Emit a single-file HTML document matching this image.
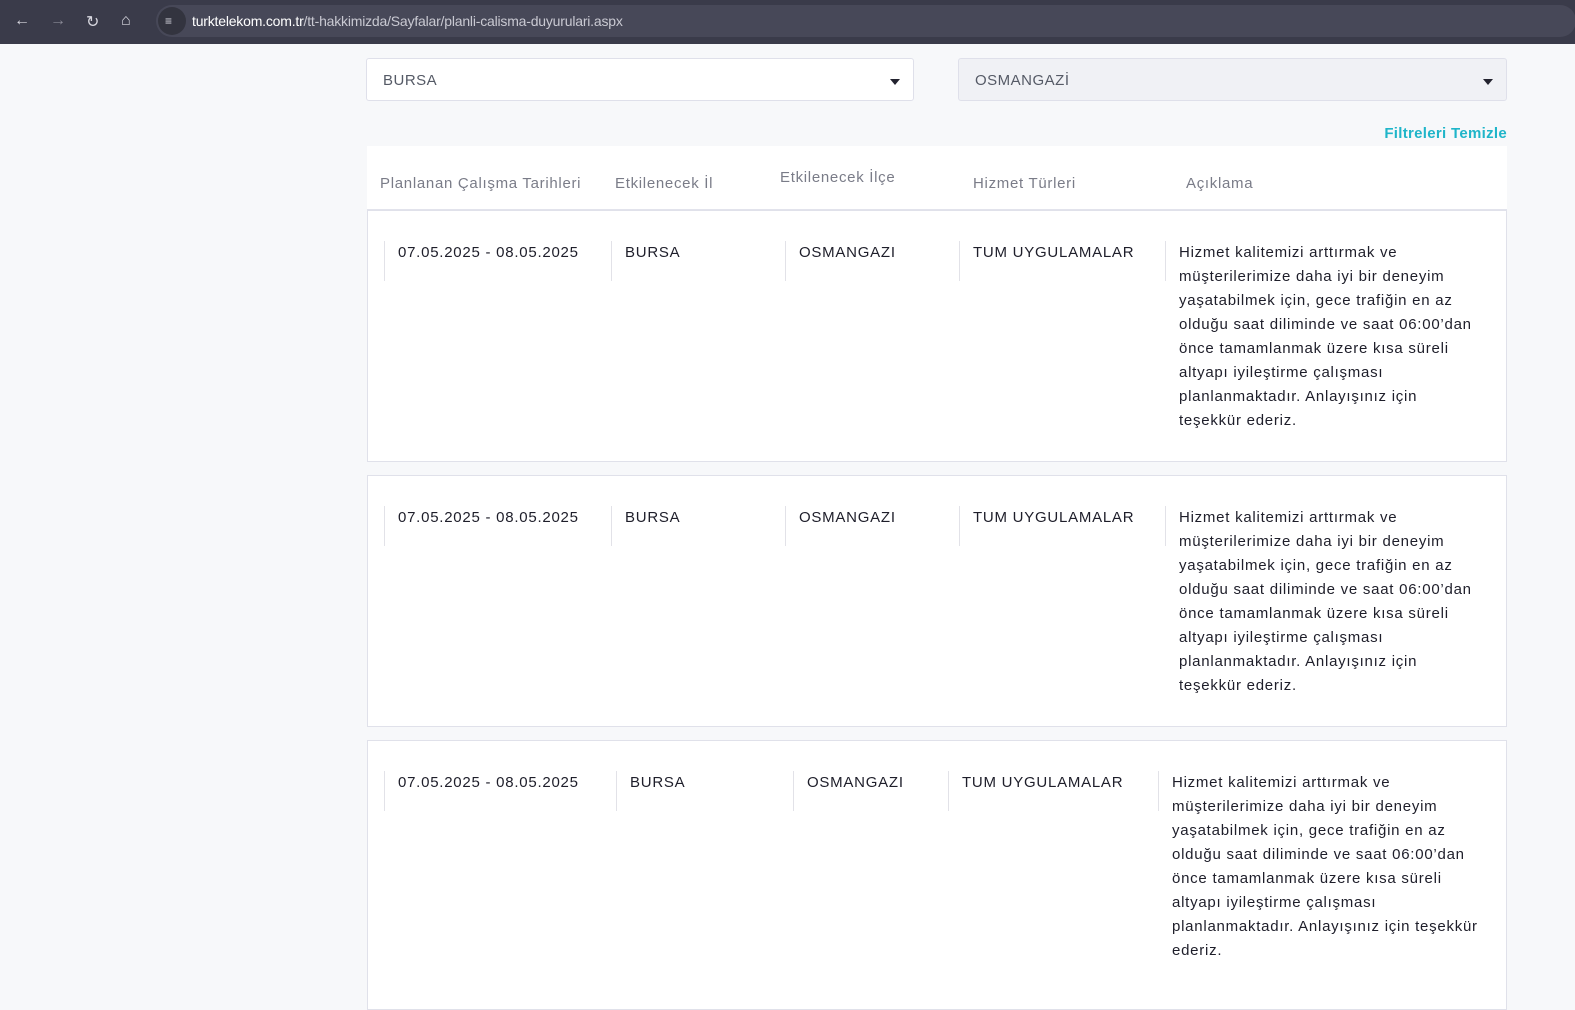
<!DOCTYPE html>
<html><head><meta charset="utf-8"><style>
*{margin:0;padding:0;box-sizing:border-box}
body{width:1575px;height:994px;overflow:hidden;background:#f7f8fa;font-family:"Liberation Sans",sans-serif;position:relative;color:#1e1e2a}
.bar{position:absolute;left:0;top:0;width:1575px;height:44px;background:#3a3b4a}
.pill{position:absolute;left:156px;top:5px;width:1420px;height:32px;border-radius:16px;background:#474858}
.url{position:absolute;left:192px;top:13px;font-size:14px;color:#fff;letter-spacing:-0.2px}
.url span{color:#c9c9d2}
.ic{position:absolute;top:12px;color:#d8d8e0;font-size:16px}
.sel{position:absolute;top:58px;height:43px;border:1px solid #dfe0ea;border-radius:3px;font-size:15px;color:#555a66;padding:13px 16px;letter-spacing:0.5px}
.sel:after{content:"";position:absolute;right:13px;top:20px;border-left:5px solid transparent;border-right:5px solid transparent;border-top:6px solid #23232f}
.clear{position:absolute;right:68px;top:125px;font-size:15px;font-weight:bold;color:#1fb5c9;letter-spacing:0.3px}
.head{position:absolute;left:367px;top:146px;width:1140px;height:64px;background:#fff;border-bottom:1px solid #e2e3ec}
.h{position:absolute;font-size:15px;color:#7a7c88;letter-spacing:0.7px}
.card{position:absolute;left:367px;width:1140px;background:#fff;border:1px solid #e0e1ea}
.c{position:absolute;top:30px;font-size:15px;line-height:24px;color:#1e1e2a;padding-left:13px;border-left:1px solid #e2e2e8;height:40px;letter-spacing:0.75px;white-space:nowrap}
.c.d{height:auto;border:none;padding-left:0}
.dl{position:absolute;top:30px;width:1px;height:40px;background:#e2e2e8}
</style></head><body>
<div class="bar"><div class="pill"></div>
<div class="ic" style="left:14px">&#8592;</div>
<div class="ic" style="left:50px;color:#8a8a96">&#8594;</div>
<div class="ic" style="left:86px">&#8635;</div>
<div class="ic" style="left:121px">&#8962;</div>
<div style="position:absolute;left:158px;top:7px;width:28px;height:28px;border-radius:14px;background:#33343f"></div>
<div class="ic" style="left:165px;font-size:12px;top:14px">&#8801;</div>
<div class="url">turktelekom.com.tr<span>/tt-hakkimizda/Sayfalar/planli-calisma-duyurulari.aspx</span></div>
</div>
<div class="sel" style="left:366px;width:548px;background:#fff">BURSA</div>
<div class="sel" style="left:958px;width:549px;background:#f0f1f5">OSMANGAZİ</div>
<div class="clear">Filtreleri Temizle</div>
<div class="head">
<div class="h" style="left:13px;top:29px">Planlanan Çalışma Tarihleri</div>
<div class="h" style="left:248px;top:29px">Etkilenecek İl</div>
<div class="h" style="left:413px;top:23px">Etkilenecek İlçe</div>
<div class="h" style="left:606px;top:29px">Hizmet Türleri</div>
<div class="h" style="left:819px;top:29px">Açıklama</div>
</div>

<div class="card" style="top:210px;height:252px">
<div class="c" style="left:16px">07.05.2025 - 08.05.2025</div>
<div class="c" style="left:243px">BURSA</div>
<div class="c" style="left:417px">OSMANGAZI</div>
<div class="c" style="left:591px">TUM UYGULAMALAR</div>
<div class="dl" style="left:797px"></div>
<div class="c d" style="left:811px">Hizmet kalitemizi arttırmak ve<br>müşterilerimize daha iyi bir deneyim<br>yaşatabilmek için, gece trafiğin en az<br>olduğu saat diliminde ve saat 06:00’dan<br>önce tamamlanmak üzere kısa süreli<br>altyapı iyileştirme çalışması<br>planlanmaktadır. Anlayışınız için<br>teşekkür ederiz.</div>
</div>

<div class="card" style="top:475px;height:252px">
<div class="c" style="left:16px">07.05.2025 - 08.05.2025</div>
<div class="c" style="left:243px">BURSA</div>
<div class="c" style="left:417px">OSMANGAZI</div>
<div class="c" style="left:591px">TUM UYGULAMALAR</div>
<div class="dl" style="left:797px"></div>
<div class="c d" style="left:811px">Hizmet kalitemizi arttırmak ve<br>müşterilerimize daha iyi bir deneyim<br>yaşatabilmek için, gece trafiğin en az<br>olduğu saat diliminde ve saat 06:00’dan<br>önce tamamlanmak üzere kısa süreli<br>altyapı iyileştirme çalışması<br>planlanmaktadır. Anlayışınız için<br>teşekkür ederiz.</div>
</div>

<div class="card" style="top:740px;height:270px">
<div class="c" style="left:16px">07.05.2025 - 08.05.2025</div>
<div class="c" style="left:248px">BURSA</div>
<div class="c" style="left:425px">OSMANGAZI</div>
<div class="c" style="left:580px">TUM UYGULAMALAR</div>
<div class="dl" style="left:790px"></div>
<div class="c d" style="left:804px">Hizmet kalitemizi arttırmak ve<br>müşterilerimize daha iyi bir deneyim<br>yaşatabilmek için, gece trafiğin en az<br>olduğu saat diliminde ve saat 06:00’dan<br>önce tamamlanmak üzere kısa süreli<br>altyapı iyileştirme çalışması<br>planlanmaktadır. Anlayışınız için teşekkür<br>ederiz.</div>
</div>
</body></html>
